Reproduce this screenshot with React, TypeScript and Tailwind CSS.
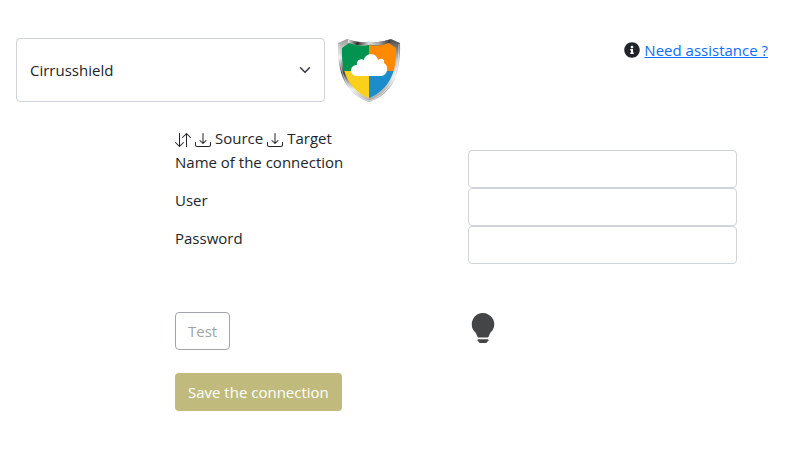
import { BsArrowDownUp, BsDownload, BsLightbulbFill } from "react-icons/bs";
import { FaInfoCircle } from "react-icons/fa";

function ShieldLogo() {
  return (
    <svg viewBox="0 0 64 64" className="size-16 shrink-0" role="img" aria-label="Cirrusshield logo">
      <defs>
        <linearGradient id="metal-left" x1="0" y1="0" x2="0" y2="1">
          <stop offset="0" stopColor="#9a9a9a" />
          <stop offset="0.14" stopColor="#c4c4c4" />
          <stop offset="0.3" stopColor="#e8e8e8" />
          <stop offset="0.42" stopColor="#8a8a8a" />
          <stop offset="0.54" stopColor="#3a3a3a" />
          <stop offset="0.66" stopColor="#9c9c9c" />
          <stop offset="0.8" stopColor="#ededed" />
          <stop offset="1" stopColor="#a8a8a8" />
        </linearGradient>
        <linearGradient id="metal-right" x1="0" y1="0" x2="0" y2="1">
          <stop offset="0" stopColor="#4c4c4c" />
          <stop offset="0.14" stopColor="#777" />
          <stop offset="0.35" stopColor="#c9c9c9" />
          <stop offset="0.6" stopColor="#e9e9e9" />
          <stop offset="0.8" stopColor="#bdbdbd" />
          <stop offset="1" stopColor="#a8a8a8" />
        </linearGradient>
        <linearGradient id="top-edge" x1="0" y1="0" x2="1" y2="0">
          <stop offset="0" stopColor="#eee" />
          <stop offset="0.22" stopColor="#2c2c2c" />
          <stop offset="0.5" stopColor="#ddd" />
          <stop offset="0.72" stopColor="#aaa" />
          <stop offset="1" stopColor="#3c3c3c" />
        </linearGradient>
        <clipPath id="face">
          <path d="M5 10 L12 5 Q22 9 32 7 Q42 9 52 5 L59 10 C60 31 54 51 32 60 C10 51 4 31 5 10Z" />
        </clipPath>
        <filter id="soft" x="-10%" y="-10%" width="120%" height="120%">
          <feGaussianBlur stdDeviation="0.4" />
        </filter>
      </defs>
      <g filter="url(#soft)">
        <path d="M1 5 L10 1 Q22 5 32 4 V64 C8 56 0 34 1 5Z" fill="url(#metal-left)" />
        <path d="M32 4 Q42 5 54 1 L63 5 C64 34 57 56 32 64Z" fill="url(#metal-right)" />
        <path d="M11 3 Q22 7 32 5 Q42 7 53 3" fill="none" stroke="url(#top-edge)" strokeWidth="3" />
        <path
          d="M2 6 C2 34 9 55 32 63 C55 55 62 34 62 6"
          fill="none"
          stroke="#fff"
          strokeWidth="1"
          strokeOpacity="0.5"
        />
        <g clipPath="url(#face)">
          <rect width="32" height="33" fill="#069451" />
          <rect x="32" width="32" height="33" fill="#ff8a05" />
          <rect y="33" width="32" height="31" fill="#fad01d" />
          <rect x="32" y="33" width="32" height="31" fill="#1c8dcb" />
        </g>
        <path
          d="M20 38 C12 38 12 27 20 27 C19 22 24 20 27 22 C28 15 39 14 41 22 C45 19 48 22 47 25 C52 27 51 38 44 38Z"
          fill="#fff"
        />
      </g>
    </svg>
  );
}

function Field({ id, label, type }: { id: string; label: string; type: string }) {
  return (
    <div className="grid grid-cols-[293fr_269fr]">
      <label htmlFor={id}>{label}</label>
      <input
        id={id}
        type={type}
        className="h-[38px] w-full min-w-0 rounded border border-[#ced4da] bg-white px-3 outline-none focus:border-[#86b7fe]"
      />
    </div>
  );
}

export default function App() {
  return (
    <div className="bg-white pt-[38px] pb-9 font-['Open_Sans','Noto_Sans',sans-serif] text-[15px] leading-6 text-[#212529]">
      <header className="flex items-start pr-11 pl-4">
        <div className="relative w-[309px]">
          <select
            aria-label="Connector"
            className="h-16 w-full appearance-none rounded border border-[#ced4da] bg-white pr-9 pl-[13px]"
          >
            <option>Cirrusshield</option>
          </select>
          <svg
            viewBox="0 0 16 16"
            className="pointer-events-none absolute top-[26px] right-[14px] h-3 w-3"
            fill="none"
            stroke="#343a40"
            strokeWidth="2"
            strokeLinecap="round"
            strokeLinejoin="round"
            aria-hidden="true"
          >
            <path d="m2 5 6 6 6-6" />
          </svg>
        </div>
        <div className="ml-3">
          <ShieldLogo />
        </div>
        <div className="ml-auto flex items-center gap-1">
          <FaInfoCircle className="size-4" aria-hidden="true" />
          <a href="#assistance" className="text-[#0d6efd] underline">
            Need assistance ?
          </a>
        </div>
      </header>

      <form className="pt-6 pr-[75px] pl-[175px]" onSubmit={(e) => e.preventDefault()}>
        <div className="flex items-center gap-1">
          <BsArrowDownUp className="mt-1 size-4" aria-hidden="true" />
          <BsDownload className="mt-1 size-4" aria-hidden="true" />
          <span>Source</span>
          <BsDownload className="mt-1 size-4" aria-hidden="true" />
          <span>Target</span>
        </div>
        <Field id="name" label="Name of the connection" type="text" />
        <Field id="user" label="User" type="text" />
        <Field id="password" label="Password" type="password" />

        <div className="mt-12 grid grid-cols-[293fr_269fr]">
          <div>
            <button
              type="button"
              disabled
              className="h-[38px] rounded border border-[#a0a4a8] px-3 text-[#a0a4a8]"
            >
              Test
            </button>
          </div>
          <BsLightbulbFill className="mt-px size-[30px] text-[#444546]" aria-hidden="true" />
        </div>
        <button type="submit" className="mt-[23px] h-[38px] rounded bg-[#c0bb7d] px-[13px] text-white">
          Save the connection
        </button>
      </form>
    </div>
  );
}
